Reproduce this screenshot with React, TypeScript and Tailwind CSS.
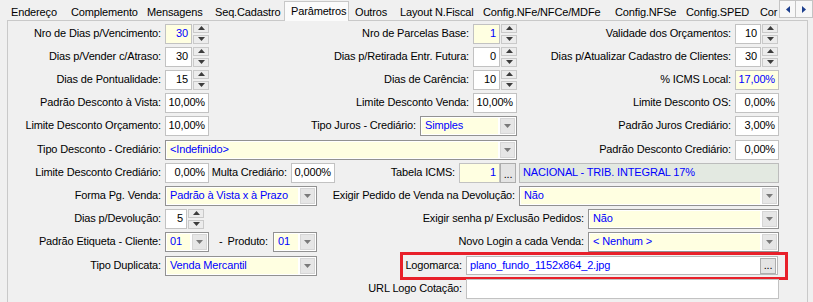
import React from 'react';

const tabs = [
  { t: 'Endereço', w: 'w-[60px]' },
  { t: 'Complemento', w: 'w-[76px]' },
  { t: 'Mensagens', w: 'w-[68px]' },
  { t: 'Seq.Cadastro', w: 'w-[75px]' },
  { t: 'Parâmetros', w: 'w-[65px]', active: true },
  { t: 'Outros', w: 'w-[45px]' },
  { t: 'Layout N.Fiscal', w: 'w-[83px]' },
  { t: 'Config.NFe/NFCe/MDFe', w: 'w-[132px]' },
  { t: 'Config.NFSe', w: 'w-[71px]' },
  { t: 'Config.SPED', w: 'w-[74px]' },
  { t: 'Cor', w: 'w-[25px]' },
];

function Lbl({ w, children }: { w: string; children?: React.ReactNode }) {
  return <span className={`${w} shrink-0 whitespace-nowrap text-right pr-[4px]`}>{children}</span>;
}

function Box({ w, value, yellow }: { w: string; value?: string; yellow?: boolean }) {
  return (
    <div
      className={`${w} h-[20px] shrink-0 flex items-center justify-end px-[3px] border border-[#c2c2c2] whitespace-nowrap ${
        yellow ? 'bg-[#ffffe1] text-[#0000ff]' : 'bg-white text-black'
      }`}
    >
      {value}
    </div>
  );
}

function Arrow({ dir }: { dir: 'up' | 'down' }) {
  return (
    <svg width="7" height="4" viewBox="0 0 7 4">
      {dir === 'up' ? <polygon points="0,4 3.5,0 7,4" fill="#3c3c3c" /> : <polygon points="0,0 3.5,4 7,0" fill="#3c3c3c" />}
    </svg>
  );
}

function Spin({ w, value, yellow }: { w: string; value: string; yellow?: boolean }) {
  return (
    <div className="flex shrink-0 h-[20px]">
      <Box w={w} value={value} yellow={yellow} />
      <div className="ml-[1px] w-[16px] flex flex-col gap-[2px]">
        <div className="h-[9px] flex items-center justify-center border border-[#c9c9c9] bg-[#ececec]">
          <Arrow dir="up" />
        </div>
        <div className="h-[9px] flex items-center justify-center border border-[#c9c9c9] bg-[#ececec]">
          <Arrow dir="down" />
        </div>
      </div>
    </div>
  );
}

function Combo({ w, value }: { w: string; value: string }) {
  return (
    <div className={`${w} h-[20px] shrink-0 flex gap-[2px] p-[1px] border border-[#929292] bg-white`}>
      <div className="flex-1 flex items-center pl-[3px] bg-[#ffffe1] text-[#0000ff] whitespace-nowrap overflow-hidden">
        {value}
      </div>
      <div className="w-[15px] flex items-center justify-center bg-[#e6e6e6] border border-[#d6d6d6]">
        <svg width="7" height="4" viewBox="0 0 7 4">
          <polygon points="0,0 3.5,4 7,0" fill="#7a7a7a" />
        </svg>
      </div>
    </div>
  );
}

function Dots({ h }: { h: string }) {
  return (
    <div className={`w-[16px] ${h} shrink-0 flex items-end justify-center pb-[2px] leading-none bg-[#e4e4e4] border border-[#adadad] text-black`}>
      ...
    </div>
  );
}

export default function App() {
  return (
    <div className="w-[813px] h-[302px] overflow-hidden bg-[#f0f0f0] text-[11px] tracking-[-0.15px] text-black font-['Liberation_Sans',Arial,sans-serif]">
      {/* tab strip */}
      <div className="relative z-10 flex h-[21px]">
        <div className="ml-[5px] w-[774px] flex overflow-hidden">
          {tabs.map((tab) =>
            tab.active ? (
              <div
                key={tab.t}
                className={`${tab.w} shrink-0 mt-[1px] h-[20px] pl-[6px] leading-[18px] bg-[#fbfbfb] border-x border-t border-[#c8c8c8] whitespace-nowrap`}
              >
                {tab.t}
              </div>
            ) : (
              <div key={tab.t} className={`${tab.w} shrink-0 mt-[3px] h-[18px] pl-[6px] leading-[18px] whitespace-nowrap`}>
                {tab.t}
              </div>
            )
          )}
        </div>
        <div className="flex h-[18px]">
          <div className="w-[17px] flex items-center justify-center border border-[#c4c4c4] bg-[#f7f7f7]">
            <svg width="4" height="7" viewBox="0 0 4 7">
              <polygon points="4,0 0,3.5 4,7" fill="#1d3f8e" />
            </svg>
          </div>
          <div className="w-[17px] flex items-center justify-center border border-l-0 border-[#c4c4c4] bg-[#f7f7f7]">
            <svg width="4" height="7" viewBox="0 0 4 7">
              <polygon points="0,0 4,3.5 0,7" fill="#1d3f8e" />
            </svg>
          </div>
        </div>
      </div>

      {/* page */}
      <div className="-mt-[1px] ml-[7px] w-[801px] h-[300px] border border-[#c9c9c9] pt-[1px]">
        <div className="flex items-center h-[23px]">
          <Lbl w="w-[157px]">Nro de Dias p/Vencimento:</Lbl>
          <Spin w="w-[27px]" value="30" yellow />
          <Lbl w="w-[264px]">Nro de Parcelas Base:</Lbl>
          <Spin w="w-[27px]" value="1" yellow />
          <Lbl w="w-[218px]">Validade dos Orçamentos:</Lbl>
          <Spin w="w-[26px]" value="10" />
        </div>
        <div className="flex items-center h-[23px]">
          <Lbl w="w-[157px]">Dias p/Vender c/Atraso:</Lbl>
          <Spin w="w-[27px]" value="30" />
          <Lbl w="w-[264px]">Dias p/Retirada Entr. Futura:</Lbl>
          <Spin w="w-[27px]" value="0" />
          <Lbl w="w-[218px]">Dias p/Atualizar Cadastro de Clientes:</Lbl>
          <Spin w="w-[26px]" value="30" />
        </div>
        <div className="flex items-center h-[23px]">
          <Lbl w="w-[157px]">Dias de Pontualidade:</Lbl>
          <Spin w="w-[27px]" value="15" />
          <Lbl w="w-[264px]">Dias de Carência:</Lbl>
          <Spin w="w-[27px]" value="10" />
          <Lbl w="w-[218px]">% ICMS Local:</Lbl>
          <Box w="w-[44px]" value="17,00%" yellow />
        </div>
        <div className="flex items-center h-[23px]">
          <Lbl w="w-[157px]">Padrão Desconto à Vista:</Lbl>
          <Box w="w-[44px]" value="10,00%" />
          <Lbl w="w-[264px]">Limite Desconto Venda:</Lbl>
          <Box w="w-[44px]" value="10,00%" />
          <Lbl w="w-[218px]">Limite Desconto OS:</Lbl>
          <Box w="w-[44px]" value="0,00%" />
        </div>
        <div className="flex items-center h-[23px]">
          <Lbl w="w-[157px]">Limite Desconto Orçamento:</Lbl>
          <Box w="w-[44px]" value="10,00%" />
          <Lbl w="w-[211px]">Tipo Juros - Crediário:</Lbl>
          <Combo w="w-[97px]" value="Simples" />
          <Lbl w="w-[218px]">Padrão Juros Crediário:</Lbl>
          <Box w="w-[44px]" value="3,00%" />
        </div>
        <div className="flex items-center h-[23px] mt-[1px]">
          <Lbl w="w-[157px]">Tipo Desconto - Crediário:</Lbl>
          <Combo w="w-[352px]" value="<Indefinido>" />
          <Lbl w="w-[218px]">Padrão Desconto Crediário:</Lbl>
          <Box w="w-[44px]" value="0,00%" />
        </div>
        <div className="flex items-center h-[23px]">
          <Lbl w="w-[157px]">Limite Desconto Crediário:</Lbl>
          <Box w="w-[44px]" value="0,00%" />
          <Lbl w="w-[82px]">Multa Crediário:</Lbl>
          <Box w="w-[44px]" value="0,000%" />
          <Lbl w="w-[124px]">Tabela ICMS:</Lbl>
          <Box w="w-[41px]" value="1" yellow />
          <Dots h="h-[20px]" />
          <div className="ml-[3px] w-[260px] h-[20px] flex items-center pl-[3px] bg-[#e3e9e1] border border-[#bcbcbc] text-[#0000ff] whitespace-nowrap">
            NACIONAL - TRIB. INTEGRAL 17%
          </div>
        </div>
        <div className="flex items-center h-[23px]">
          <Lbl w="w-[157px]">Forma Pg. Venda:</Lbl>
          <Combo w="w-[152px]" value="Padrão à Vista x à Prazo" />
          <Lbl w="w-[202px]">Exigir Pedido de Venda na Devolução:</Lbl>
          <Combo w="w-[260px]" value="Não" />
        </div>
        <div className="flex items-center h-[23px]">
          <Lbl w="w-[157px]">Dias p/Devolução:</Lbl>
          <Spin w="w-[22px]" value="5" />
          <Lbl w="w-[384px]">Exigir senha p/ Exclusão Pedidos:</Lbl>
          <Combo w="w-[191px]" value="Não" />
        </div>
        <div className="flex items-center h-[23px]">
          <Lbl w="w-[157px]">Padrão Etiqueta - Cliente:</Lbl>
          <Combo w="w-[44px]" value="01" />
          <span className="w-[64px] shrink-0 flex justify-between pl-[10px] pr-[5px] whitespace-nowrap">
            <span>-</span>
            <span>Produto:</span>
          </span>
          <Combo w="w-[44px]" value="01" />
          <Lbl w="w-[271px]">Novo Login a cada Venda:</Lbl>
          <Combo w="w-[191px]" value="< Nenhum >" />
        </div>
        <div className="flex items-center h-[23px] mt-[1px]">
          <Lbl w="w-[157px]">Tipo Duplicata:</Lbl>
          <Combo w="w-[152px]" value="Venda Mercantil" />
          <div className="ml-[83px] w-[388px] h-[28px] shrink-0 flex items-center border-[3px] border-[#e8202a]">
            <Lbl w="w-[63px]">Logomarca:</Lbl>
            <div className="w-[312px] h-[19px] shrink-0 flex items-center justify-between pl-[3px] pr-[1px] bg-white border border-[#b9b9b9] text-[#0000ff] whitespace-nowrap">
              <span>plano_fundo_1152x864_2.jpg</span>
              <Dots h="h-[16px]" />
            </div>
          </div>
        </div>
        <div className="flex items-center h-[23px]">
          <Lbl w="w-[458px]">URL Logo Cotação:</Lbl>
          <Box w="w-[313px]" />
        </div>
      </div>
    </div>
  );
}
